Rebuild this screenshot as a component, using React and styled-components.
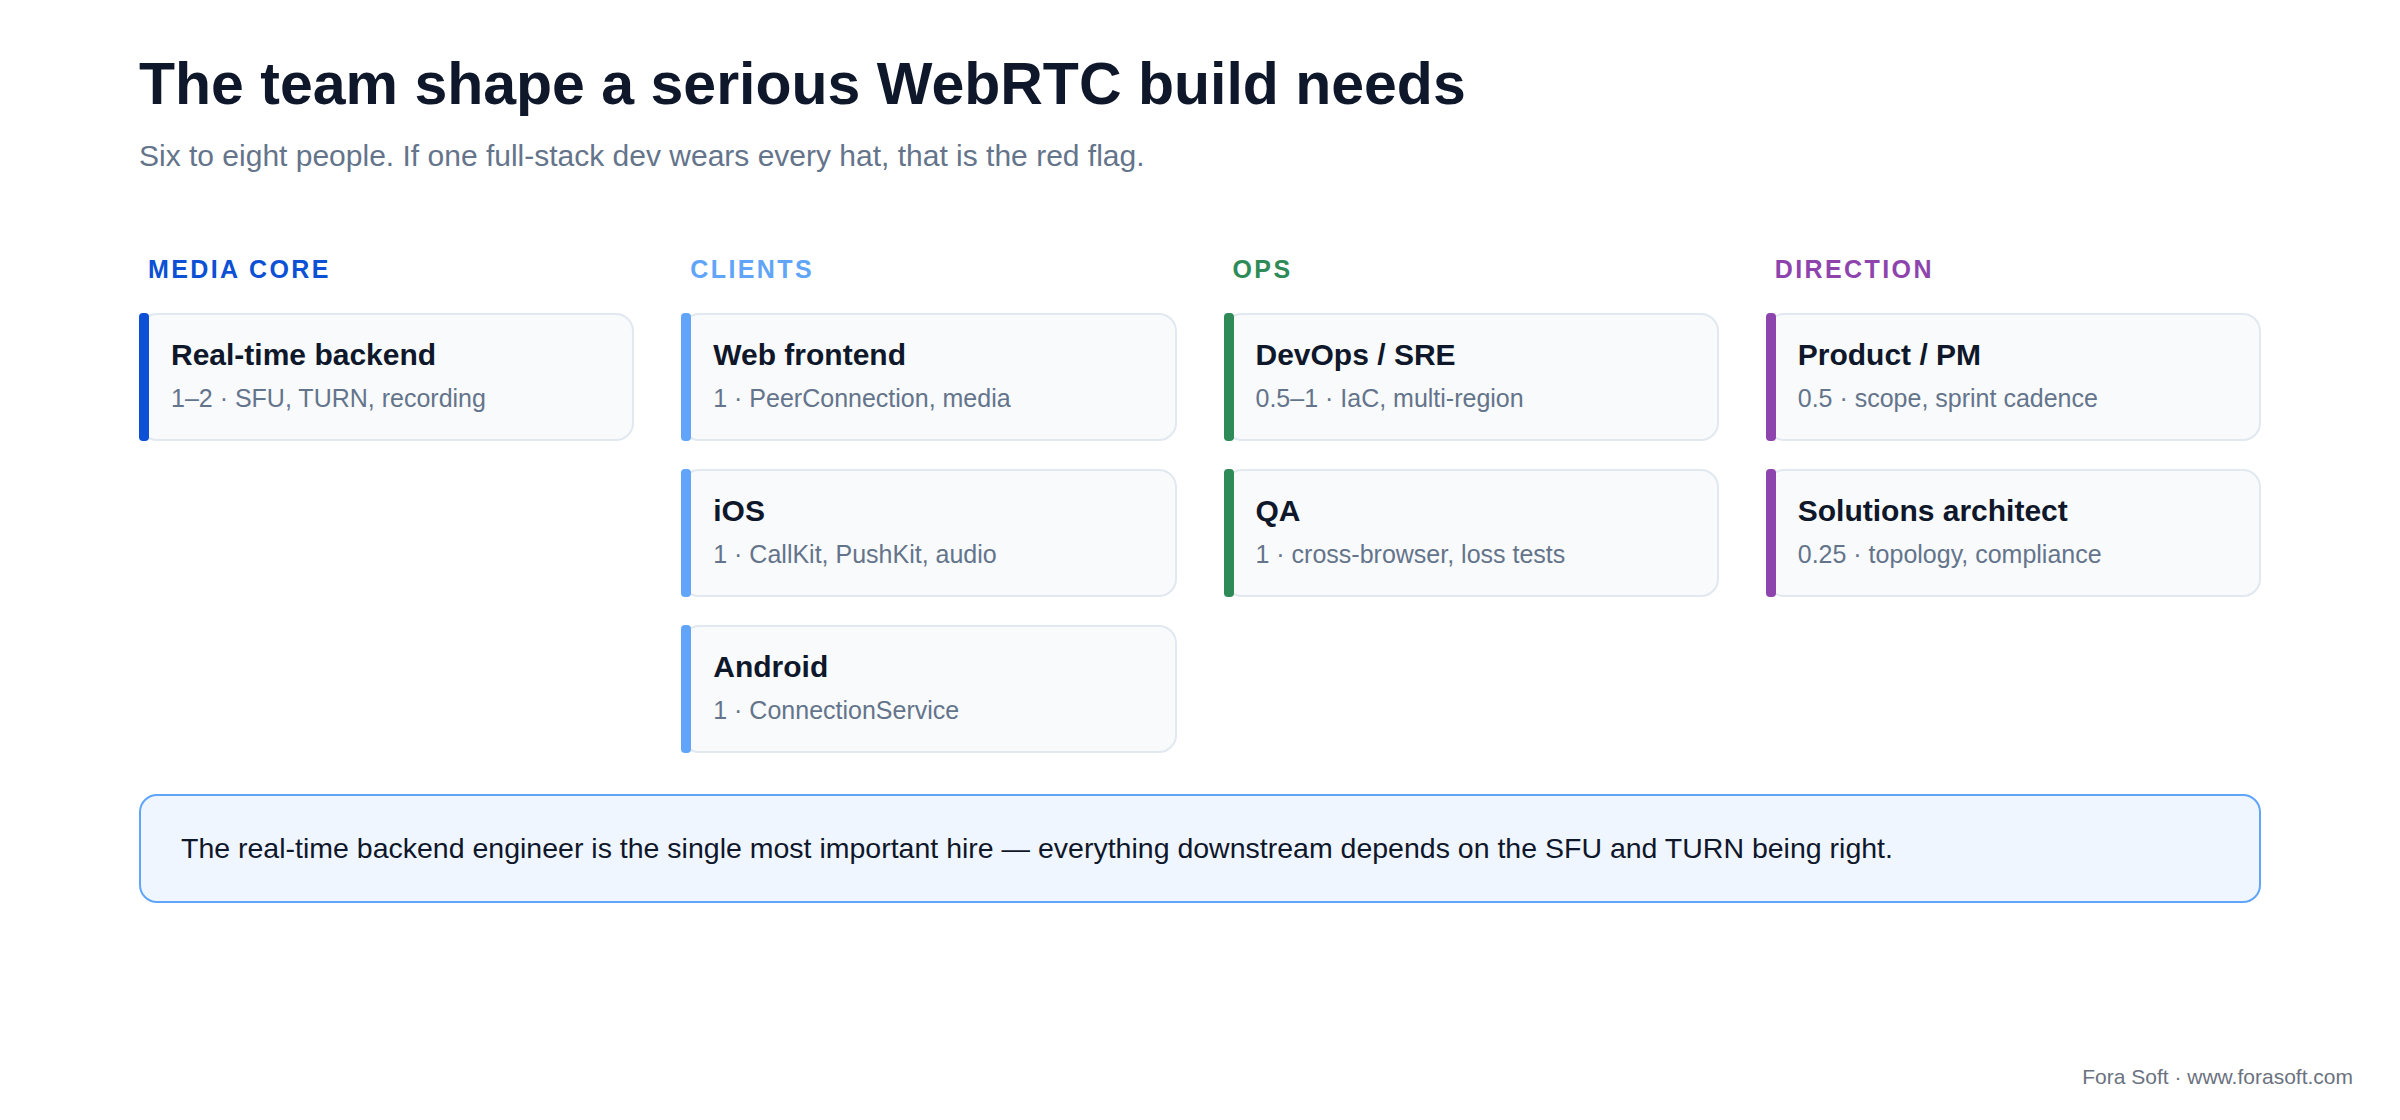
import React from "react";
import styled, { createGlobalStyle } from "styled-components";

const Global = createGlobalStyle`
  html, body { margin: 0; padding: 0; background: #fff; }
  body { font-family: "Liberation Sans", Arial, sans-serif; }
`;

const Page = styled.div`
  position: relative;
  width: 2400px;
  height: 1120px;
  box-sizing: border-box;
  padding: 49px 139px 0 139px;
`;
const Title = styled.h1`
  margin: 0;
  font-size: 59px;
  line-height: 70px;
  font-weight: 700;
  color: #0f172a;
`;
const Subtitle = styled.p`
  margin: 19px 0 0;
  font-size: 30px;
  line-height: 36px;
  color: #64748b;
`;
const Columns = styled.div`
  margin-top: 80px;
  display: grid;
  grid-template-columns: repeat(4, 1fr);
  column-gap: 47px;
  align-items: start;
`;
const Column = styled.div`
  display: flex;
  flex-direction: column;
  gap: 28px;
`;
const Heading = styled.div`
  padding-left: 9px;
  font-size: 25px;
  line-height: 30px;
  font-weight: 700;
  letter-spacing: 2.4px;
  color: ${(p) => p.$c};
  margin-bottom: 1px;
`;
const Card = styled.div`
  position: relative;
  height: 128px;
  box-sizing: border-box;
  background: #f8fafc;
  border: 2px solid #e2e8f0;
  border-radius: 18px;
  padding: 21px 20px 0 30px;
  &::before {
    content: "";
    position: absolute;
    left: -2px;
    top: -2px;
    bottom: -2px;
    width: 10px;
    border-radius: 4px;
    background: ${(p) => p.$c};
  }
`;
const CardTitle = styled.div`
  font-size: 30px;
  line-height: 38px;
  font-weight: 700;
  color: #0f172a;
`;
const CardSub = styled.div`
  margin-top: 9px;
  font-size: 25px;
  line-height: 30px;
  color: #64748b;
`;
const Callout = styled.div`
  margin-top: 41px;
  height: 109px;
  box-sizing: border-box;
  display: flex;
  align-items: center;
  padding: 0 40px;
  background: #eff6ff;
  border: 2px solid #60a5fa;
  border-radius: 18px;
  font-size: 28.5px;
  color: #0f172a;
`;
const Footer = styled.div`
  position: absolute;
  right: 47px;
  bottom: 31px;
  font-size: 21px;
  color: #6b7280;
`;

const cols = [
  { name: "MEDIA CORE", c: "#0b50d5", cards: [["Real-time backend", "1–2 · SFU, TURN, recording"]] },
  {
    name: "CLIENTS",
    c: "#60a5fa",
    cards: [
      ["Web frontend", "1 · PeerConnection, media"],
      ["iOS", "1 · CallKit, PushKit, audio"],
      ["Android", "1 · ConnectionService"],
    ],
  },
  {
    name: "OPS",
    c: "#2e8b57",
    cards: [
      ["DevOps / SRE", "0.5–1 · IaC, multi-region"],
      ["QA", "1 · cross-browser, loss tests"],
    ],
  },
  {
    name: "DIRECTION",
    c: "#8e44ad",
    cards: [
      ["Product / PM", "0.5 · scope, sprint cadence"],
      ["Solutions architect", "0.25 · topology, compliance"],
    ],
  },
];

export default function App() {
  return (
    <Page>
      <Global />
      <Title>The team shape a serious WebRTC build needs</Title>
      <Subtitle>Six to eight people. If one full-stack dev wears every hat, that is the red flag.</Subtitle>
      <Columns>
        {cols.map((col) => (
          <Column key={col.name}>
            <Heading $c={col.c}>{col.name}</Heading>
            {col.cards.map(([t, s]) => (
              <Card key={t} $c={col.c}>
                <CardTitle>{t}</CardTitle>
                <CardSub>{s}</CardSub>
              </Card>
            ))}
          </Column>
        ))}
      </Columns>
      <Callout>
        The real-time backend engineer is the single most important hire — everything downstream depends on the SFU and TURN being right.
      </Callout>
      <Footer>Fora Soft · www.forasoft.com</Footer>
    </Page>
  );
}
